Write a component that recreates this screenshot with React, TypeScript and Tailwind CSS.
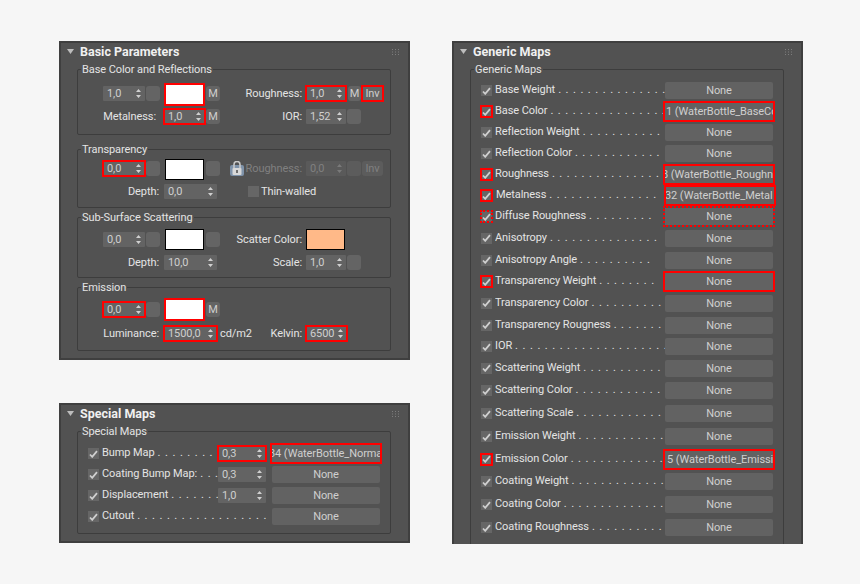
import { ReactNode } from "react";

const Arrows = ({ dim }: { dim?: boolean }) => (
  <svg width="5" height="9" viewBox="0 0 5 9" className="shrink-0">
    <path d="M2.5 0 L5 3 L0 3 Z M2.5 9 L5 6 L0 6 Z" fill={dim ? "#7a7a7a" : "#d0d0d0"} />
  </svg>
);

// number field with the little up/down arrows
const Spin = ({
  value,
  w = "w-[41px]",
  red,
  dim,
}: {
  value: string;
  w?: string;
  red?: boolean;
  dim?: boolean;
}) => (
  <div
    className={`${w} h-[15px] shrink-0 flex items-center justify-between pl-[4px] pr-[4px] ${
      dim ? "bg-[#5a5a5a] text-[#808080]" : "bg-[#636363] text-[#cfcfcf]"
    } ${red ? "outline-2 -outline-offset-1 outline-[#f00]" : "rounded-[1px]"}`}
  >
    <span>{value}</span>
    <Arrows dim={dim} />
  </div>
);

const Square = ({
  label,
  w = "w-[14px]",
  ml = "ml-[2px]",
  red,
  dim,
}: {
  label?: string;
  w?: string;
  ml?: string;
  red?: boolean;
  dim?: boolean;
}) => (
  <div
    className={`${w} ${ml} h-[15px] shrink-0 flex items-center justify-center ${
      dim ? "bg-[#5c5c5c] text-[#808080]" : "bg-[#646464] text-[#cfcfcf]"
    } ${red ? "outline-2 -outline-offset-1 outline-[#f00]" : "rounded-[3px]"}`}
  >
    {label}
  </div>
);

// up: the swatch hangs 2px under its row, the fields sit higher than its middle
const Swatch = ({ red, orange, up }: { red?: boolean; orange?: boolean; up?: boolean }) => (
  <div
    className={`w-[39px] h-[21px] shrink-0 ${up ? "-mb-[2px]" : ""} ${orange ? "bg-[#ffb988]" : "bg-white"} ${
      red ? "outline-2 -outline-offset-1 outline-[#f00]" : "border border-black"
    }`}
  />
);

const Label = ({ children, dim }: { children: ReactNode; dim?: boolean }) => (
  <span className={`ml-auto whitespace-nowrap ${dim ? "text-[#808080]" : ""}`}>{children}</span>
);

const Check = () => (
  <svg width="9" height="8" viewBox="0 0 9 8">
    <path d="M1 4.5 L3.2 6.8 L8 1.2" stroke="#cfcfcf" strokeWidth="1.8" fill="none" />
  </svg>
);

const CheckBox = ({ checked = true, red, dotted }: { checked?: boolean; red?: boolean; dotted?: boolean }) => (
  <div
    className={`w-[11px] h-[11px] shrink-0 bg-[#666666] flex items-center justify-center ${
      red ? "outline-2 -outline-offset-1 outline-[#f00]" : ""
    } ${dotted ? "outline-2 -outline-offset-1 outline-dotted outline-[#f00]" : ""}`}
  >
    {checked && <Check />}
  </div>
);

const MapButton = ({
  text,
  shift = "",
  red,
  dotted,
}: {
  text?: string;
  shift?: string;
  red?: boolean;
  dotted?: boolean;
}) => (
  <div
    className={`w-[108px] h-[17px] shrink-0 pt-[1px] bg-[#626262] text-[#cfcfcf] flex items-center overflow-hidden whitespace-nowrap ${
      text ? "" : "justify-center"
    } ${red ? "outline-2 outline-[#f00]" : ""} ${dotted ? "outline-2 outline-dotted outline-[#f00]" : ""} ${
      red || dotted ? "" : "rounded-[2px]"
    }`}
  >
    <span className={shift}>{text || "None"}</span>
  </div>
);

const Group = ({ title, children, className = "" }: { title: string; children: ReactNode; className?: string }) => (
  <fieldset className={`border border-[#3d3d3d] rounded-[2px] ${className}`}>
    <legend className="ml-[3px] px-[1px] leading-[14px]">
      <span className="block translate-y-px">{title}</span>
    </legend>
    {children}
  </fieldset>
);

const Panel = ({
  title,
  children,
  className = "",
}: {
  title: string;
  children: ReactNode;
  className?: string;
}) => (
  <div className={`w-[351px] bg-[#525252] border-2 border-[#3f3f3f] ${className}`}>
    <div className="h-[19px] flex items-center pl-[6px] pr-[9px] pb-[2px]">
      <svg width="7" height="5" viewBox="0 0 7 5" className="shrink-0">
        <path d="M0 0 H7 L3.5 5 Z" fill="#bdbdbd" />
      </svg>
      <span className="ml-[6px] font-bold text-[#f0f0f0] text-[12.5px] tracking-normal">{title}</span>
      <svg width="7" height="6" viewBox="0 0 7 6" className="ml-auto shrink-0" fill="#7d7d7d">
        <rect x="0" y="0" width="1" height="1" />
        <rect x="3" y="0" width="1" height="1" />
        <rect x="6" y="0" width="1" height="1" />
        <rect x="0" y="2.5" width="1" height="1" />
        <rect x="3" y="2.5" width="1" height="1" />
        <rect x="6" y="2.5" width="1" height="1" />
        <rect x="0" y="5" width="1" height="1" />
        <rect x="3" y="5" width="1" height="1" />
        <rect x="6" y="5" width="1" height="1" />
      </svg>
    </div>
    <div className="pl-[16px] pr-[17px] pb-[7px] flex flex-col">{children}</div>
  </div>
);

const Lock = () => (
  <svg width="14" height="16" viewBox="0 0 14 16" className="shrink-0 mr-[2px]">
    <rect x="0" y="4" width="14" height="11" rx="2" fill="#7f93aa" />
    <path d="M4 7 V3.5 a3 3 0 0 1 6 0 V7" stroke="#c9c9c9" strokeWidth="1.6" fill="none" />
    <rect x="2.5" y="7" width="9" height="7" rx="1" fill="#d8d8d8" />
    <rect x="6.2" y="9" width="1.6" height="3" fill="#555555" />
  </svg>
);

// left half of a group row ends at x=302, right half starts there
const Row = ({ left, right, className = "" }: { left: ReactNode; right?: ReactNode; className?: string }) => (
  <div className={`grid grid-cols-[224px_1fr] items-center ${className}`}>
    <div className="flex items-center">{left}</div>
    <div className="flex items-center pl-[4px]">{right}</div>
  </div>
);

const RowLabel = ({ children }: { children: ReactNode }) => (
  <span className="w-[81px] shrink-0 text-right">{children}</span>
);

// name followed by its run of leader dots
const Leader = ({ name, dots, w, ml = "ml-[3px]" }: { name: string; dots: number; w: string; ml?: string }) => (
  <div className={`${w} ${ml} shrink-0 flex pb-[1px] whitespace-nowrap overflow-hidden`}>
    <span>{name}</span>
    <span className="ml-[3px] tracking-[0.9px]">{Array(dots).fill(".").join(" ")}</span>
  </div>
);

const specialMaps = [
  { label: "Bump Map", dots: 9, spin: "0,3", red: true, text: "34 (WaterBottle_Norma", shift: "-ml-[3px]" },
  { label: "Coating Bump Map:", dots: 3, spin: "0,3" },
  { label: "Displacement", dots: 7, spin: "1,0" },
  { label: "Cutout", dots: 18 },
];

type GenericMap = {
  label: string;
  dots: number;
  h: string;
  red?: boolean;
  text?: string;
  shift?: string;
  pad?: string;
  dotted?: boolean;
  redButton?: boolean;
};

const genericMaps: GenericMap[] = [
  { label: "Base Weight", dots: 15, h: "h-[21px]" },
  { label: "Base Color", dots: 16, h: "h-[21px]", red: true, text: "1 (WaterBottle_BaseCo", shift: "ml-[1px]" },
  { label: "Reflection Weight", dots: 11, h: "h-[21px]" },
  { label: "Reflection Color", dots: 12, h: "h-[21px]" },
  { label: "Roughness", dots: 16, h: "h-[21px]", red: true, text: "8 (WaterBottle_Roughn", shift: "-ml-[3px]" },
  { label: "Metalness", dots: 15, h: "h-[21px]", red: true, text: "32 (WaterBottle_Metal", shift: "-ml-[1px]", pad: "ml-[4px]" },
  { label: "Diffuse Roughness", dots: 9, h: "h-[21px]", dotted: true },
  { label: "Anisotropy", dots: 15, h: "h-[22px]" },
  { label: "Anisotropy Angle", dots: 10, h: "h-[22px]" },
  { label: "Transparency Weight", dots: 8, h: "h-[21px]", red: true, redButton: true },
  { label: "Transparency Color", dots: 10, h: "h-[22px]" },
  { label: "Transparency Rougness", dots: 7, h: "h-[22px]" },
  { label: "IOR", dots: 21, h: "h-[21px]" },
  { label: "Scattering Weight", dots: 11, h: "h-[22px]" },
  { label: "Scattering Color", dots: 12, h: "h-[23px]" },
  { label: "Scattering Scale", dots: 12, h: "h-[23px]" },
  { label: "Emission Weight", dots: 12, h: "h-[23px]" },
  { label: "Emission Color", dots: 14, h: "h-[22px]", red: true, text: "5 (WaterBottle_Emissiv", shift: "ml-[2px]" },
  { label: "Coating Weight", dots: 13, h: "h-[23px]" },
  { label: "Coating Color", dots: 14, h: "h-[23px]" },
  { label: "Coating Roughness", dots: 10, h: "h-[23px]" },
];

export default function App() {
  return (
    <div className="w-[860px] h-[584px] overflow-hidden bg-[#f6f6f6] flex gap-[42px] pl-[59px] pt-[41px] text-[#e4e4e4] text-[11px] tracking-[-0.08px] leading-[14px] font-['Roboto',sans-serif]">
      <div className="flex flex-col gap-[43px]">
        <Panel title="Basic Parameters">
          <Group title="Base Color and Reflections" className="pt-[8px] pb-[10px]">
            <Row
              className="h-[19px]"
              left={
                <>
                  <div className="ml-[25px]" />
                  <Spin value="1,0" w="w-[42px]" />
                  <Square w="w-[14px]" ml="ml-[1px]" />
                  <div className="ml-[5px]" />
                  <Swatch red up />
                  <Square label="M" />
                  <Label>Roughness:</Label>
                </>
              }
              right={
                <>
                  <Spin value="1,0" w="w-[40px]" red />
                  <Square label="M" w="w-[13px]" />
                  <Square label="Inv" w="w-[21px]" ml="ml-[1px]" red />
                </>
              }
            />
            <Row
              className="mt-[6px] h-[15px]"
              left={
                <>
                  <span className="w-[78px] shrink-0 text-right">Metalness:</span>
                  <div className="ml-[8px]" />
                  <Spin value="1,0" red />
                  <Square label="M" w="w-[14px]" ml="ml-[1px]" />
                  <Label>IOR:</Label>
                </>
              }
              right={
                <>
                  <Spin value="1,52" w="w-[40px]" />
                  <Square w="w-[14px]" ml="ml-[1px]" />
                </>
              }
            />
          </Group>

          <Group title="Transparency" className="mt-[7px] pt-[3px] pb-[8px]">
            <Row
              className="h-[19px]"
              left={
                <>
                  <div className="ml-[25px]" />
                  <Spin value="0,0" w="w-[42px]" red />
                  <Square w="w-[14px]" ml="ml-[1px]" />
                  <div className="ml-[5px]" />
                  <Swatch up />
                  <Square />
                  <div className="ml-auto flex items-center">
                    <Lock />
                    <Label dim>Roughness:</Label>
                  </div>
                </>
              }
              right={
                <>
                  <Spin value="0,0" w="w-[40px]" dim />
                  <Square w="w-[14px]" ml="ml-[1px]" dim />
                  <Square label="Inv" w="w-[21px]" ml="ml-[1px]" dim />
                </>
              }
            />
            <Row
              className="mt-[6px] h-[15px]"
              left={
                <>
                  <RowLabel>Depth:</RowLabel>
                  <div className="ml-[5px]" />
                  <Spin value="0,0" w="w-[53px]" />
                  <div className="ml-[31px]" />
                  <CheckBox checked={false} />
                  <span className="ml-[2px] whitespace-nowrap">Thin-walled</span>
                </>
              }
            />
          </Group>

          <Group title="Sub-Surface Scattering" className="mt-[2px] pt-[5px] pb-[7px]">
            <Row
              className="h-[21px]"
              left={
                <>
                  <div className="ml-[25px]" />
                  <Spin value="0,0" w="w-[42px]" />
                  <Square w="w-[14px]" ml="ml-[1px]" />
                  <div className="ml-[5px]" />
                  <Swatch />
                  <Square />
                  <Label>Scatter Color:</Label>
                </>
              }
              right={<Swatch orange />}
            />
            <Row
              className="mt-[5px] h-[15px]"
              left={
                <>
                  <RowLabel>Depth:</RowLabel>
                  <div className="ml-[5px]" />
                  <Spin value="10,0" w="w-[53px]" />
                  <Label>Scale:</Label>
                </>
              }
              right={
                <>
                  <Spin value="1,0" w="w-[40px]" />
                  <Square w="w-[14px]" ml="ml-[1px]" />
                </>
              }
            />
          </Group>

          <Group title="Emission" className="mt-[2px] pt-[5px] pb-[9px]">
            <Row
              className="h-[21px]"
              left={
                <>
                  <div className="ml-[25px]" />
                  <Spin value="0,0" w="w-[42px]" red />
                  <Square w="w-[14px]" ml="ml-[1px]" />
                  <div className="ml-[5px]" />
                  <Swatch red />
                  <Square label="M" />
                </>
              }
            />
            <Row
              className="mt-[6px] h-[15px]"
              left={
                <>
                  <RowLabel>Luminance:</RowLabel>
                  <div className="ml-[5px]" />
                  <Spin value="1500,0" w="w-[53px]" red />
                  <span className="ml-[3px]">cd/m2</span>
                  <Label>Kelvin:</Label>
                </>
              }
              right={<Spin value="6500" w="w-[41px]" red />}
            />
          </Group>
        </Panel>

        <Panel title="Special Maps">
          <Group title="Special Maps" className="pt-[5px] pb-[6px]">
            {specialMaps.map((m) => (
              <div key={m.label} className="h-[21px] flex items-center pl-[10px]">
                <CheckBox />
                {m.spin ? (
                  <>
                    <Leader name={m.label} dots={m.dots} w="w-[116px]" />
                    <Spin value={m.spin} w="w-[48px]" red={m.red} />
                  </>
                ) : (
                  <Leader name={m.label} dots={m.dots} w="w-[164px]" />
                )}
                <div className="ml-[6px]" />
                <MapButton text={m.text} shift={m.shift} red={m.red} />
              </div>
            ))}
          </Group>
        </Panel>
      </div>

      <Panel title="Generic Maps" className="h-[503px] overflow-hidden border-b-0">
        <Group title="Generic Maps" className="pt-[4px] pb-[20px]">
          {genericMaps.map((m) => (
            <div key={m.label} className={`${m.h} flex items-center pl-[10px]`}>
              <CheckBox red={m.red} dotted={m.dotted} />
              <Leader name={m.label} dots={m.dots} w="w-[170px]" ml={m.pad} />
              <MapButton
                text={m.text}
                shift={m.shift}
                red={!!m.text || m.redButton}
                dotted={m.dotted}
              />
            </div>
          ))}
        </Group>
      </Panel>
    </div>
  );
}
